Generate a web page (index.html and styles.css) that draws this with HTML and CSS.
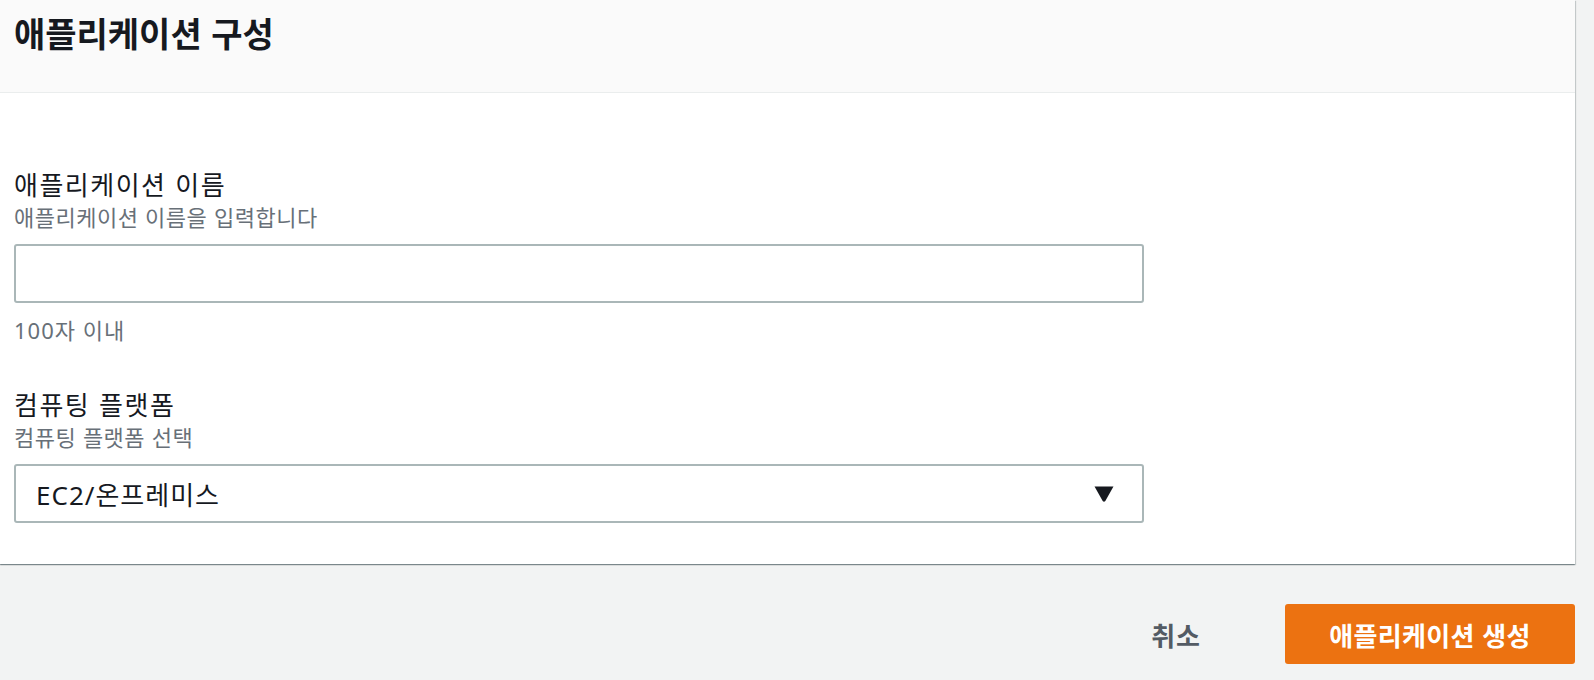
FILE: index.html
```html
<!DOCTYPE html>
<html lang="ko">
<head>
<meta charset="utf-8">
<link rel="stylesheet" href="styles.css">
</head>
<body>
<div class="page">
  <section class="card">
    <header class="card-header">
      <h2 class="card-title">애플리케이션 구성</h2>
    </header>
    <div class="card-body">
      <div class="field">
        <div class="label">애플리케이션 이름</div>
        <div class="desc">애플리케이션 이름을 입력합니다</div>
        <div class="input"></div>
        <div class="hint">100자 이내</div>
      </div>
      <div class="field field-second">
        <div class="label">컴퓨팅 플랫폼</div>
        <div class="desc">컴퓨팅 플랫폼 선택</div>
        <div class="input select">
          <span class="select-value">EC2/온프레미스</span>
          <svg class="caret" width="20" height="16" viewBox="0 0 20 16"><path d="M0.5 0.5 H19.5 L11.3 15 Q10 16.6 8.7 15 Z" fill="#16191f"/></svg>
        </div>
      </div>
    </div>
  </section>
  <div class="actions">
    <button class="btn-link">취소</button>
    <button class="btn-primary">애플리케이션 생성</button>
  </div>
</div>
</body>
</html>
```

FILE: styles.css
```css
* { box-sizing: border-box; }
html, body { margin: 0; padding: 0; }
body {
  background: #f2f3f3;
  font-family: "Noto Sans", "Noto Sans CJK KR", sans-serif;
  color: #16191f;
}
.page {
  padding-right: 19px;
}
.card {
  background: #ffffff;
  box-shadow: 0 1px 1px 0 rgba(0, 28, 36, 0.3), 1px 1px 1px 0 rgba(0, 28, 36, 0.15), -1px 1px 1px 0 rgba(0, 28, 36, 0.15);
}
.card-header {
  height: 93px;
  background: #fafafa;
  border-bottom: 1px solid #eaeded;
  padding: 11px 14px 0;
}
.card-title {
  margin: 0;
  font-family: "Noto Sans CJK KR", sans-serif;
  font-size: 34px;
  font-weight: 700;
  line-height: 44px;
  color: #16191f;
}
.card-body {
  padding: 74px 14px 41px;
}
.field {
  width: 1130px;
}
.field-second {
  margin-top: 42px;
}
.label {
  font-family: "Noto Sans CJK KR", sans-serif;
  font-size: 26px;
  letter-spacing: 1.5px;
  line-height: 34px;
  color: #16191f;
}
.desc, .hint {
  font-family: "Noto Sans CJK KR", sans-serif;
  font-size: 22px;
  letter-spacing: 0.5px;
  line-height: 30px;
  color: #687078;
}
.hint {
  font-family: "Noto Sans", "Noto Sans CJK KR", sans-serif;
  letter-spacing: 1px;
  margin-top: 12px;
}
.input {
  margin-top: 13px;
  height: 59px;
  border: 2px solid #aab7b8;
  border-radius: 3px;
  background: #fff;
}
.select {
  display: flex;
  align-items: center;
  justify-content: space-between;
  padding: 0 28px 0 20px;
}
.select-value {
  font-family: "Noto Sans", "Noto Sans CJK KR", sans-serif;
  font-size: 26px;
  letter-spacing: 1px;
  color: #16191f;
}
.caret { display: block; }
.actions {
  display: flex;
  justify-content: flex-end;
  align-items: center;
  gap: 56px;
  margin-top: 40px;
}
.btn-link {
  background: none;
  border: none;
  padding: 0 28px;
  font-family: "Noto Sans CJK KR", sans-serif;
  font-size: 26px;
  letter-spacing: 1px;
  font-weight: 700;
  color: #545b64;
}
.btn-primary {
  width: 290px;
  height: 60px;
  background: #ec7211;
  border: none;
  border-radius: 3px;
  color: #ffffff;
  font-family: "Noto Sans CJK KR", sans-serif;
  font-size: 26px;
  letter-spacing: 0.3px;
  font-weight: 700;
}
```
